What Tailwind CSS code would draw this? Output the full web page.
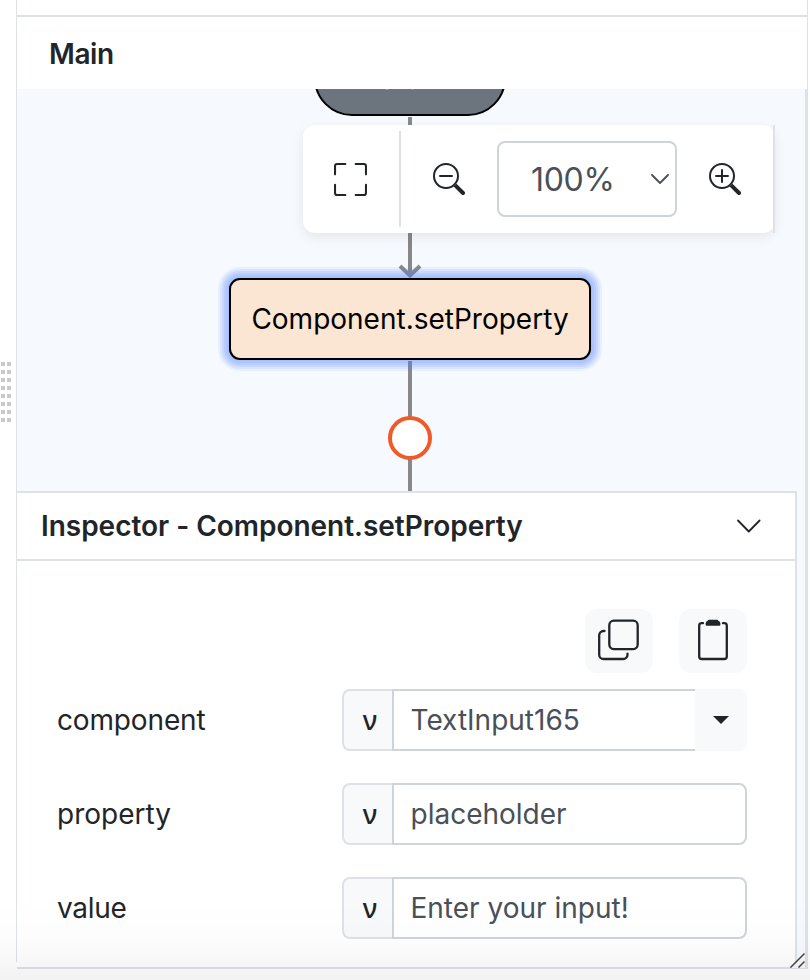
<!DOCTYPE html>
<html lang="en">
<head>
<meta charset="utf-8">
<title>Flow editor</title>
<script src="https://cdn.jsdelivr.net/npm/@tailwindcss/browser@4"></script>
</head>
<body class="relative h-[980px] w-[810px] overflow-hidden bg-white font-[Inter,sans-serif] text-[28px] leading-none text-[#212529]">
<div class="flex h-full">
  <aside class="flex w-4 shrink-0 items-start pl-px pt-[362px]">
    <svg width="10" height="60" viewBox="0 0 10 60" fill="#c9c9c9"><path d="M0 0h4v4H0zM6 0h4v4H6zM0 8h4v4H0zM6 8h4v4H6zM0 16h4v4H0zM6 16h4v4H6zM0 24h4v4H0zM6 24h4v4H6zM0 32h4v4H0zM6 32h4v4H6zM0 40h4v4H0zM6 40h4v4H6zM0 48h4v4H0zM6 48h4v4H6zM0 56h4v4H0zM6 56h4v4H6z"/></svg>
  </aside>
  <div class="h-[962px] w-px shrink-0 bg-[#dee2e6]"></div>
  <main class="flex h-[969px] w-[791px] shrink-0 flex-col border-r border-[#dee2e6]">
    <div class="h-[17px] shrink-0 border-b-2 border-[#dee2e6]"></div>
    <header class="flex h-[72px] shrink-0 items-center pl-8 pt-[2px] font-semibold tracking-[-0.4px]"><h1>Main</h1></header>
    <section class="flex h-[880px] flex-col border-r-2 border-b-2 border-[#dee2e6] bg-[#f6f9fe]">
      <div class="relative h-[402px] shrink-0 overflow-hidden">
        <div class="absolute left-[391px] top-[28px] h-[156px] w-1 bg-[#888]"></div>
        <svg class="absolute left-[381px] top-[174px]" width="24" height="16" viewBox="0 0 24 16" fill="none" stroke="#888" stroke-width="4"><path d="M2 3l10 9.500 10-9.500"/></svg>
        <div class="absolute left-[297px] top-[-55px] flex h-[82px] w-[192px] items-center justify-center rounded-[38px] border-2 border-black bg-[#6c757d] pt-[7px] text-white">Start</div>
        <div class="absolute left-[391px] top-[272px] h-[130px] w-1 bg-[#888]"></div>
        <div class="absolute left-[212px] top-[189px] flex h-[82px] w-[362px] items-center justify-center rounded-[11px] border-2 border-black bg-[#fbe6d4] text-black shadow-[0_0_0_1px_rgba(80,130,255,0.08),0_0_0_3px_rgba(80,130,255,0.10),0_0_0_5px_rgba(80,130,255,0.12),0_0_0_7px_rgba(80,130,255,0.12),0_0_0_9px_rgba(80,130,255,0.10),0_0_0_11px_rgba(80,130,255,0.08)]"><span>Component.setProperty</span></div>
        <div class="absolute left-[371px] top-[327px] size-[44px] rounded-full border-4 border-[#f05a28] bg-white"></div>
        <div class="absolute left-[286px] top-[36px] flex h-[108px] w-[472px] items-center rounded-xl bg-white shadow-[0_4px_12px_rgba(0,0,0,0.08)]">
          <button class="flex w-24 items-center justify-center pr-px"><svg width="33" height="33" viewBox="0 0 16 16" fill="currentColor"><path d="M1.500 1a.5.5 0 0 0-.5.5v4a.5.5 0 0 1-1 0v-4A1.500 1.500 0 0 1 1.500 0h4a.5.5 0 0 1 0 1h-4zM10 .5a.5.5 0 0 1 .5-.5h4A1.500 1.500 0 0 1 16 1.500v4a.5.5 0 0 1-1 0v-4a.5.5 0 0 0-.5-.5h-4a.5.5 0 0 1-.5-.5zM.5 10a.5.5 0 0 1 .5.5v4a.5.5 0 0 0 .5.5h4a.5.5 0 0 1 0 1h-4A1.500 1.500 0 0 1 0 14.500v-4a.5.5 0 0 1 .5-.5zm15 0a.5.5 0 0 1 .5.5v4a1.500 1.500 0 0 1-1.500 1.500h-4a.5.5 0 0 1 0-1h4a.5.5 0 0 0 .5-.5v-4a.5.5 0 0 1 .5-.5z"/></svg></button>
          <div class="h-24 w-0.5 bg-[#dee2e6]"></div>
          <button class="flex w-24 items-center justify-center"><svg width="32" height="32" viewBox="0 0 16 16" fill="currentColor"><path fill-rule="evenodd" d="M6.500 12a5.500 5.500 0 1 0 0-11 5.500 5.500 0 0 0 0 11zM13 6.500a6.500 6.500 0 1 1-13 0 6.500 6.500 0 0 1 13 0z"/><path d="M10.344 11.742c.03.04.062.078.098.115l3.850 3.850a1 1 0 0 0 1.415-1.414l-3.850-3.850a1.007 1.007 0 0 0-.115-.1 6.538 6.538 0 0 1-1.398 1.400z"/><path d="M3 6.500a.5.5 0 0 1 .5-.5h6a.5.5 0 0 1 0 1h-6a.5.5 0 0 1-.5-.5z"/></svg></button>
          <div class="flex h-[76px] w-[180px] items-center justify-between rounded-lg border-2 border-[#ced4da] pl-8 pr-1.5 text-[32px] text-[#495057]"><span class="pt-[2px] tracking-[-0.3px]">100%</span><svg width="18" height="12" viewBox="0 0 18 12" fill="none" stroke="#495057" stroke-width="1.800" stroke-linecap="round" stroke-linejoin="round"><path d="M1 2l8 8 8-8"/></svg></div>
          <button class="flex w-24 items-center justify-center"><svg width="32" height="32" viewBox="0 0 16 16" fill="currentColor"><path fill-rule="evenodd" d="M6.500 12a5.500 5.500 0 1 0 0-11 5.500 5.500 0 0 0 0 11zM13 6.500a6.500 6.500 0 1 1-13 0 6.500 6.500 0 0 1 13 0z"/><path d="M10.344 11.742c.03.04.062.078.098.115l3.850 3.850a1 1 0 0 0 1.415-1.414l-3.850-3.850a1.007 1.007 0 0 0-.115-.1 6.538 6.538 0 0 1-1.398 1.400z"/><path d="M6.500 3a.5.5 0 0 1 .5.5V6h2.500a.5.5 0 0 1 0 1H7v2.500a.5.5 0 0 1-1 0V7H3.500a.5.5 0 0 1 0-1H6V3.500a.5.5 0 0 1 .5-.5z"/></svg></button>
          <div class="h-full w-0.5 bg-[#dee2e6]"></div>
        </div>
      </div>
      <section class="flex h-[476px] w-[780px] flex-col border-t-2 border-r-2 border-[#dee2e6] bg-white">
        <div class="flex h-[68px] shrink-0 items-center justify-between border-b-2 border-[#dee2e6] pl-6 pr-[34px]">
          <h2 class="font-semibold tracking-[-0.03px]">Inspector - Component.setProperty</h2>
          <svg width="25" height="14" viewBox="0 0 25 14" fill="none" stroke="currentColor" stroke-width="1.800" stroke-linecap="round" stroke-linejoin="round"><path d="M2 1.500l10.800 11 10.800-11"/></svg>
        </div>
        <div class="flex flex-col pl-10 pr-12 pt-12">
          <div class="mb-4 flex justify-end gap-[26px]">
            <button class="flex h-16 w-[68px] items-center justify-center rounded-xl bg-[#f8f9fa] pb-[3px] pr-0.5"><svg width="42" height="42" viewBox="0 0 42 42" fill="none" stroke="currentColor" stroke-width="2.300" stroke-linecap="round"><rect x="12.300" y="1.700" width="28.400" height="28.400" rx="4.500"/><path d="M7.500 12H6.500a4.300 4.300 0 0 0-4.300 4.300v19.400a4.300 4.300 0 0 0 4.300 4.300h19.700a4.300 4.300 0 0 0 4.300-4.300v-1"/></svg></button>
            <button class="flex h-16 w-[68px] items-center justify-center rounded-xl bg-[#f8f9fa] pb-[3px] pr-px"><svg width="32" height="42" viewBox="0 0 32 42" fill="none" stroke="currentColor" stroke-width="2.300" stroke-linecap="round"><path d="M6 4.200H4.700a2.500 2.500 0 0 0-2.500 2.500v30.800a2.500 2.500 0 0 0 2.500 2.500h22.600a2.500 2.500 0 0 0 2.500-2.500V6.700a2.500 2.500 0 0 0-2.500-2.500H26"/><path fill="currentColor" stroke="none" d="M12 .7h8q1.200 0 1.500 1.300 1.900.4 1.900 2.500v1q0 1.200-1.200 1.200H9.800Q8.600 6.700 8.600 5.500V4.500q0-2.100 1.900-2.500.3-1.300 1.500-1.300z"/></svg></button>
          </div>
          <div class="flex flex-col gap-8">
            <div class="flex h-[62px] items-center">
              <label class="w-[285px] tracking-[-0.15px]">component</label>
              <span class="flex h-full w-[50px] items-center justify-center rounded-l-lg border-2 border-r-0 border-[#dee2e6] bg-[#f8f9fa] pb-0.5 pl-1 font-['Noto_Sans',sans-serif] text-[27px] font-medium">ν</span>
              <div class="flex h-full w-[303px] items-center border-2 border-r-0 border-[#ced4da] pl-[16.500px] text-[#495057]">TextInput165</div>
              <button class="flex h-full w-[52px] items-center justify-center rounded-r-lg bg-[#f8f9fa]"><svg width="16" height="8" viewBox="0 0 16 8" fill="currentColor"><path d="M0 0h16L8 8z"/></svg></button>
            </div>
            <div class="flex h-[62px] items-center">
              <label class="w-[285px]">property</label>
              <span class="flex h-full w-[50px] items-center justify-center rounded-l-lg border-2 border-r-0 border-[#dee2e6] bg-[#f8f9fa] pb-0.5 pl-1 font-['Noto_Sans',sans-serif] text-[27px] font-medium">ν</span>
              <div class="flex h-full w-[355px] items-center rounded-r-lg border-2 border-[#ced4da] pl-[16.500px] text-[#495057]">placeholder</div>
            </div>
            <div class="flex h-[62px] items-center">
              <label class="w-[285px] tracking-[-0.3px]">value</label>
              <span class="flex h-full w-[50px] items-center justify-center rounded-l-lg border-2 border-r-0 border-[#dee2e6] bg-[#f8f9fa] pb-0.5 pl-1 font-['Noto_Sans',sans-serif] text-[27px] font-medium">ν</span>
              <div class="flex h-full w-[355px] items-center rounded-r-lg border-2 border-[#ced4da] pl-[16.500px] text-[#495057]">Enter your input!</div>
            </div>
          </div>
        </div>
      </section>
    </section>
  </main>
</div>
<svg class="absolute left-[789px] top-[952px]" width="16" height="16" viewBox="0 0 16 16" fill="none"><path d="M2 16L16 2v14z" fill="#f8f8f8"/><path d="M1.500 15.500l14-14M9.500 15.500l6-6" stroke="#444" stroke-width="1.500"/></svg>
<div class="pointer-events-none absolute inset-x-0 bottom-0 h-20 bg-gradient-to-b from-black/0 via-black/1 to-black/5"></div>
</body>
</html>
